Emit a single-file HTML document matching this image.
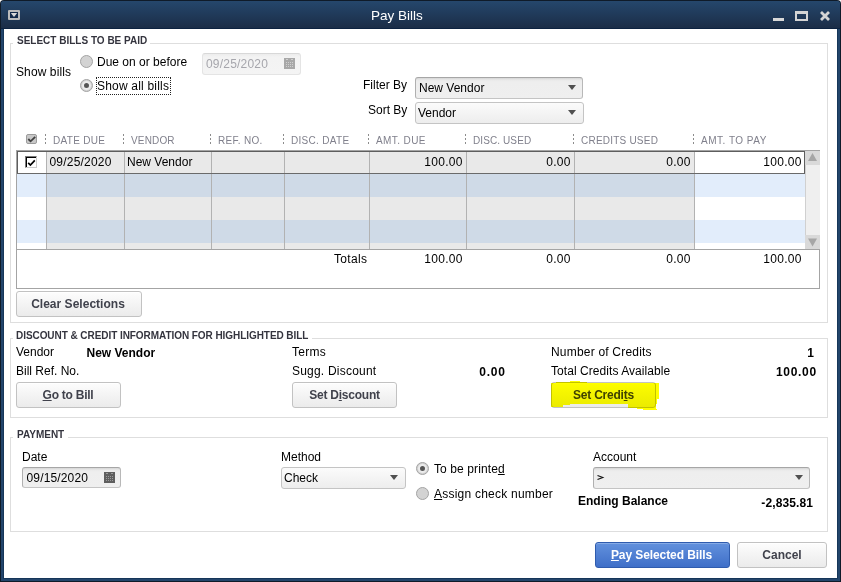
<!DOCTYPE html>
<html><head><meta charset="utf-8">
<style>
*{margin:0;padding:0;box-sizing:border-box}
html,body{width:841px;height:582px;overflow:hidden;background:#fff}
body{position:relative;font-family:"Liberation Sans",sans-serif;font-size:12px;color:#000}
.a{position:absolute}
.t{position:absolute;white-space:nowrap;font-size:12px;line-height:14px}
.s{position:absolute;white-space:nowrap;font-size:10px;line-height:11px;font-weight:bold;color:#34343e}
.h{position:absolute;white-space:nowrap;font-size:10px;line-height:11px;color:#80808c;letter-spacing:0.3px}
.b{font-weight:bold}
.r{text-align:right}
.grp{position:absolute;border:1px solid #dedede}
.gt{position:absolute;background:#fff;height:3px}
.btn{position:absolute;border:1px solid #c2c2c2;border-radius:3px;background:linear-gradient(#fdfdfd,#ebebeb);box-shadow:inset 0 1px 0 #fff}
.btn span{position:absolute;left:0;right:0;text-align:center;white-space:nowrap;font-size:12px;line-height:14px;font-weight:bold;color:#40424c}
.dd{position:absolute;border:1px solid #c4c4c4;border-radius:3px;background:linear-gradient(#fbfbfb,#ededed)}
.arr{position:absolute;width:0;height:0;border-left:4px solid transparent;border-right:4px solid transparent;border-top:5px solid #505050}
.radio{position:absolute;width:13px;height:13px;border-radius:50%;border:1px solid #a4a4a4;background:#d3d3d3}
.dot{position:absolute;left:1px;top:1px;width:9px;height:9px;border-radius:50%;border:2px solid #ececec;background:#555}
.sep{position:absolute;top:134px;width:1px;height:10px;background:repeating-linear-gradient(#8c8c8c 0 2px,transparent 2px 4px)}
.vl{position:absolute;top:151px;width:1px;height:98px;background:#b2b2b2}
.cal{position:absolute;width:11px;height:11px;background:#8a8a8a}
</style></head><body>

<!-- window frame -->
<div class="a" style="left:0;top:0;width:841px;height:582px;background:#0f1b29;border-radius:4px 4px 0 0"></div>
<div class="a" style="left:1px;top:1px;width:839px;height:580px;background:#23456b;border-radius:3px 3px 0 0"></div>
<div class="a" style="left:1px;top:1px;width:839px;height:27px;background:linear-gradient(#25476c,#1b2d47);border-radius:3px 3px 0 0"></div>
<div class="a" style="left:1px;top:28px;width:839px;height:1px;background:#0c2240"></div>
<div class="a" style="left:3px;top:29px;width:835px;height:550px;background:#163659"></div>
<div class="a" style="left:4px;top:29px;width:833px;height:549px;background:#fff"></div>

<!-- title bar -->
<div class="a" style="left:8px;top:10px;width:12px;height:10px;border:2px solid #bcbcbc;border-radius:1px;background:#132a4a"></div>
<svg class="a" style="left:0;top:0" width="30" height="30"><path d="M10.8 13H17.2L14 17Z" fill="#d8d8d8"/></svg>
<div class="t" style="left:371px;top:8px;font-size:13.5px;line-height:16px;color:#fff">Pay Bills</div>
<div class="a" style="left:773px;top:18px;width:11px;height:3px;background:#d8d8d8"></div>
<div class="a" style="left:795px;top:11px;width:13px;height:10px;border:2px solid #d4d4d4;border-top-width:3px"></div>
<svg class="a" style="left:819px;top:10px" width="12" height="12" viewBox="0 0 12 12"><path d="M2 2L10 10M10 2L2 10" stroke="#d4d4d4" stroke-width="2.8"/></svg>

<!-- SELECT BILLS group -->
<div class="grp" style="left:10px;top:43px;width:818px;height:280px"></div>
<div class="gt" style="left:13px;top:42px;width:137px"></div>
<div class="s" style="left:17px;top:35px">SELECT BILLS TO BE PAID</div>

<div class="t" style="left:16px;top:65px;letter-spacing:0.1px">Show bills</div>
<div class="radio" style="left:80px;top:55px"></div>
<div class="t" style="left:97px;top:55px">Due on or before</div>
<div class="radio" style="left:80px;top:79px"><div class="dot"></div></div>
<div class="t" style="left:97px;top:79px;letter-spacing:0.2px">Show all bills</div>
<div class="a" style="left:96px;top:77px;width:75px;height:18px;border:1px dotted #222"></div>

<div class="a" style="left:202px;top:53px;width:99px;height:22px;border:1px solid #e4e4e4;border-top-color:#d8d8d8;border-radius:3px;background:linear-gradient(#ececec,#f3f3f3 3px,#f4f4f4)"></div>
<div class="t" style="left:206px;top:57px;color:#a6a6ac;letter-spacing:0.2px">09/25/2020</div>
<svg class="a" style="left:284px;top:58px" width="11" height="11"><rect width="11" height="11" fill="#a8a8a8"/><path d="M2 1h2v1h-2zM7 1h2v1h-2zM2 4h1v1h-1zM4 4h1v1h-1zM6 4h1v1h-1zM8 4h1v1h-1zM2 6h1v1h-1zM4 6h1v1h-1zM6 6h1v1h-1zM8 6h1v1h-1zM2 8h1v1h-1zM4 8h1v1h-1zM6 8h1v1h-1zM8 8h1v1h-1z" fill="#d0d0d0"/></svg>

<div class="t" style="left:363px;top:78px">Filter By</div>
<div class="t" style="left:368px;top:103px">Sort By</div>
<div class="dd" style="left:415px;top:77px;width:168px;height:22px;background:linear-gradient(#d6d6d6,#e9e9e9 2px,#eeeeee 4px,#efefef);border-color:#a6a6a6 #b8b8b8 #c4c4c4 #b0b0b0"></div>
<div class="t" style="left:419px;top:81px">New Vendor</div>
<div class="arr" style="left:568px;top:85px"></div>
<div class="dd" style="left:415px;top:102px;width:169px;height:22px"></div>
<div class="t" style="left:418px;top:106px">Vendor</div>
<div class="arr" style="left:568px;top:110px"></div>

<!-- table header -->
<div class="a" style="left:26px;top:134px;width:11px;height:10px;background:#c8c8c8;border:1px solid #9c9c9c;border-radius:2px"></div>
<svg class="a" style="left:0;top:0" width="50" height="150"><path d="M28.3 139L30.6 141.3L35.2 136.8" stroke="#404040" stroke-width="1.8" fill="none"/></svg>
<div class="sep" style="left:45px"></div>
<div class="sep" style="left:123px"></div>
<div class="sep" style="left:210px"></div>
<div class="sep" style="left:283px"></div>
<div class="sep" style="left:368px"></div>
<div class="sep" style="left:465px"></div>
<div class="sep" style="left:573px"></div>
<div class="sep" style="left:693px"></div>
<div class="h" style="left:53px;top:135px">DATE DUE</div>
<div class="h" style="left:131px;top:135px;letter-spacing:0.15px">VENDOR</div>
<div class="h" style="left:218px;top:135px">REF. NO.</div>
<div class="h" style="left:291px;top:135px">DISC. DATE</div>
<div class="h" style="left:376px;top:135px;letter-spacing:0.4px">AMT. DUE</div>
<div class="h" style="left:473px;top:135px;letter-spacing:0.1px">DISC. USED</div>
<div class="h" style="left:581px;top:135px;letter-spacing:0.22px">CREDITS USED</div>
<div class="h" style="left:701px;top:135px;letter-spacing:0.5px">AMT. TO PAY</div>

<!-- table body -->
<div class="a" style="left:16px;top:150px;width:804px;height:139px;border:1px solid #a4a4a4;background:#fff"></div>
<!-- rows -->
<div class="a" style="left:17px;top:151px;width:29px;height:22px;background:#fff"></div>
<div class="a" style="left:46px;top:151px;width:648px;height:22px;background:#e9e9e9"></div>
<div class="a" style="left:694px;top:151px;width:111px;height:22px;background:#fff"></div>
<div class="a" style="left:17px;top:174px;width:29px;height:23px;background:#e2edfb"></div>
<div class="a" style="left:46px;top:174px;width:648px;height:23px;background:#cfdae7"></div>
<div class="a" style="left:694px;top:174px;width:111px;height:23px;background:#e2edfb"></div>
<div class="a" style="left:46px;top:197px;width:648px;height:23px;background:#e9e9e9"></div>
<div class="a" style="left:17px;top:220px;width:29px;height:23px;background:#e2edfb"></div>
<div class="a" style="left:46px;top:220px;width:648px;height:23px;background:#cfdae7"></div>
<div class="a" style="left:694px;top:220px;width:111px;height:23px;background:#e2edfb"></div>
<div class="a" style="left:46px;top:243px;width:648px;height:6px;background:#e9e9e9"></div>
<!-- col lines -->
<div class="vl" style="left:46px"></div>
<div class="vl" style="left:124px"></div>
<div class="vl" style="left:211px"></div>
<div class="vl" style="left:284px"></div>
<div class="vl" style="left:369px"></div>
<div class="vl" style="left:466px"></div>
<div class="vl" style="left:574px"></div>
<div class="vl" style="left:694px"></div>
<!-- grid bottom -->
<div class="a" style="left:17px;top:249px;width:802px;height:1px;background:#a4a4a4"></div>
<!-- selected row frame -->
<div class="a" style="left:17px;top:151px;width:788px;height:23px;border:1px solid #5e5e5e;border-bottom-color:#6a6a6a"></div>
<!-- scrollbar -->
<div class="a" style="left:805px;top:151px;width:15px;height:98px;background:#efefef;border-left:1px solid #d0d0d0"></div>
<div class="a" style="left:805px;top:151px;width:15px;height:14px;background:#d9d9d9"></div>
<div class="a" style="left:805px;top:235px;width:15px;height:14px;background:#d9d9d9"></div>
<svg class="a" style="left:805px;top:151px" width="15" height="98"><path d="M3 10H12L7.5 2Z" fill="#a6a6a6"/><path d="M3 87.5H12L7.5 95.5Z" fill="#a6a6a6"/></svg>
<!-- row1 content -->
<div class="a" style="left:25px;top:156px;width:12px;height:12px;background:#fff;border-top:1px solid #7a7a7a;border-left:1px solid #7a7a7a;border-right:1px solid #cbcbcb;border-bottom:1px solid #cbcbcb;box-shadow:inset 1px 1px 0 #000"></div>
<svg class="a" style="left:0;top:0" width="40" height="170"><path d="M28.2 162.8L30.4 165L34.8 160.4" stroke="#000" stroke-width="1.7" fill="none"/></svg>
<div class="t" style="left:49.5px;top:155px;letter-spacing:0.2px">09/25/2020</div>
<div class="t" style="left:127px;top:155px">New Vendor</div>
<div class="t r" style="left:380px;top:155px;width:82.8px;letter-spacing:0.3px">100.00</div>
<div class="t r" style="left:480px;top:155px;width:90.8px;letter-spacing:0.3px">0.00</div>
<div class="t r" style="left:591px;top:155px;width:99.8px;letter-spacing:0.3px">0.00</div>
<div class="t r" style="left:711px;top:155px;width:90.8px;letter-spacing:0.3px">100.00</div>
<!-- totals -->
<div class="t" style="left:334px;top:252px;letter-spacing:0.35px">Totals</div>
<div class="t r" style="left:380px;top:252px;width:82.8px;letter-spacing:0.3px">100.00</div>
<div class="t r" style="left:480px;top:252px;width:90.8px;letter-spacing:0.3px">0.00</div>
<div class="t r" style="left:591px;top:252px;width:99.8px;letter-spacing:0.3px">0.00</div>
<div class="t r" style="left:711px;top:252px;width:90.8px;letter-spacing:0.3px">100.00</div>

<div class="btn" style="left:16px;top:291px;width:126px;height:26px"><span style="top:5px;letter-spacing:0.02px;padding-right:2px">Clear Selections</span></div>

<!-- DISCOUNT group -->
<div class="grp" style="left:10px;top:338px;width:818px;height:80px"></div>
<div class="gt" style="left:13px;top:337px;width:299px"></div>
<div class="s" style="left:16px;top:330px;letter-spacing:-0.06px">DISCOUNT &amp; CREDIT INFORMATION FOR HIGHLIGHTED BILL</div>
<div class="t" style="left:16px;top:345px">Vendor</div>
<div class="t b" style="left:86.5px;top:346px">New Vendor</div>
<div class="t" style="left:16px;top:364px">Bill Ref. No.</div>
<div class="btn" style="left:16px;top:382px;width:105px;height:26px"><span style="top:5px;letter-spacing:-0.25px;padding-right:1px"><u>G</u>o to Bill</span></div>
<div class="t" style="left:292px;top:345px;letter-spacing:0.3px">Terms</div>
<div class="t" style="left:292px;top:364px;letter-spacing:0.21px">Sugg. Discount</div>
<div class="t b r" style="left:440px;top:365px;width:65.8px;letter-spacing:0.8px">0.00</div>
<div class="btn" style="left:292px;top:382px;width:105px;height:26px"><span style="top:5px;letter-spacing:-0.22px">Set D<u>i</u>scount</span></div>
<div class="t" style="left:551px;top:345px;letter-spacing:0.2px">Number of Credits</div>
<div class="t b r" style="left:760px;top:346px;width:54px">1</div>
<div class="t" style="left:551px;top:364px;letter-spacing:0.06px">Total Credits Available</div>
<div class="t b r" style="left:760px;top:365px;width:56.8px;letter-spacing:0.7px">100.00</div>
<div class="btn" style="left:551px;top:382px;width:105px;height:26px"><span style="top:5px;letter-spacing:-0.22px">Set Credi<u>t</u>s</span></div>
<svg class="a" style="left:548px;top:378px;mix-blend-mode:multiply" width="115" height="35"><path d="M3 5H109V26H3ZM8 4H39V5H8ZM22 3H32V4H22ZM109 5H111V21H109ZM3 26H15V29H3ZM15 26H22V27H15ZM80 26H108V30H80ZM89 30H108V31H89ZM95 31H109V32H95Z" fill="#ffff00"/></svg>

<!-- PAYMENT group -->
<div class="grp" style="left:10px;top:437px;width:818px;height:95px"></div>
<div class="gt" style="left:13px;top:436px;width:55px"></div>
<div class="s" style="left:17px;top:429px">PAYMENT</div>
<div class="t" style="left:22px;top:450px">Date</div>
<div class="a" style="left:22px;top:467px;width:99px;height:21px;border:1px solid #bdbdbd;border-color:#a6a6a6 #b8b8b8 #c4c4c4 #b0b0b0;border-radius:3px;background:linear-gradient(#d6d6d6,#e9e9e9 2px,#eeeeee 4px,#efefef)"></div>
<div class="t" style="left:26.5px;top:471px;letter-spacing:0.15px">09/15/2020</div>
<svg class="a" style="left:104px;top:472px" width="11" height="11"><rect width="11" height="11" fill="#5e5e5e"/><path d="M2 1h2v1h-2zM7 1h2v1h-2zM2 4h1v1h-1zM4 4h1v1h-1zM6 4h1v1h-1zM8 4h1v1h-1zM2 6h1v1h-1zM4 6h1v1h-1zM6 6h1v1h-1zM8 6h1v1h-1zM2 8h1v1h-1zM4 8h1v1h-1zM6 8h1v1h-1zM8 8h1v1h-1z" fill="#9a9a9a"/></svg>
<div class="t" style="left:281px;top:450px">Method</div>
<div class="dd" style="left:281px;top:467px;width:125px;height:22px"></div>
<div class="t" style="left:284px;top:471px">Check</div>
<div class="arr" style="left:390px;top:475px"></div>
<div class="radio" style="left:416px;top:462px"><div class="dot"></div></div>
<div class="t" style="left:434px;top:462px;letter-spacing:0.1px">To be printe<u>d</u></div>
<div class="radio" style="left:416px;top:487px"></div>
<div class="t" style="left:434px;top:487px;letter-spacing:0.23px"><u>A</u>ssign check number</div>
<div class="t" style="left:593px;top:450px">Account</div>
<div class="dd" style="left:593px;top:467px;width:217px;height:22px;background:linear-gradient(#d6d6d6,#e9e9e9 2px,#eeeeee 4px,#efefef);border-color:#a6a6a6 #b8b8b8 #c4c4c4 #b0b0b0"></div>
<svg class="a" style="left:590px;top:470px" width="20" height="14"><path d="M7.5 5.6L12.8 7.5L7.5 9.4" stroke="#111" stroke-width="1.1" fill="none"/></svg>
<div class="arr" style="left:795px;top:475px"></div>
<div class="t b" style="left:578px;top:494px">Ending Balance</div>
<div class="t b r" style="left:740px;top:496px;width:73.1px;letter-spacing:0.12px">-2,835.81</div>

<!-- bottom buttons -->
<div class="btn" style="left:595px;top:542px;width:135px;height:26px;border-color:#2f5cae;background:linear-gradient(#6291dd,#3f6fc8);box-shadow:inset 0 1px 0 #86abe6"><span style="top:5px;color:#fff;letter-spacing:-0.09px;padding-right:2px"><u>P</u>ay Selected Bills</span></div>
<div class="btn" style="left:737px;top:542px;width:90px;height:26px"><span style="top:5px">Cancel</span></div>

</body></html>
